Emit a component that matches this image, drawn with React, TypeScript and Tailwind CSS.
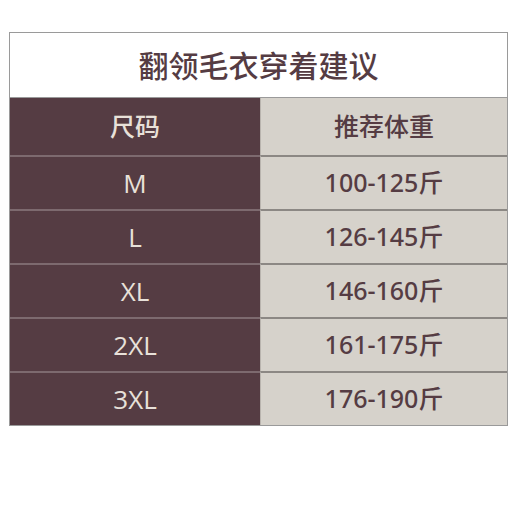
const rows = [
  { size: "M", weight: "100-125斤" },
  { size: "L", weight: "126-145斤" },
  { size: "XL", weight: "146-160斤" },
  { size: "2XL", weight: "161-175斤" },
  { size: "3XL", weight: "176-190斤" },
];

const font = { fontFamily: '"Open Sans", "Noto Sans CJK SC", sans-serif' };
const numFont = { fontFamily: '"Noto Sans", "Noto Sans CJK SC", sans-serif' };

export default function App() {
  return (
    <div className="h-[520px] w-[520px] bg-white pl-[9px] pt-[32px]" style={font}>
      <div className="w-[499px] border border-[#9a9a9a]">
        <div className="flex h-[64px] items-center justify-center bg-white text-[30px] font-medium text-[#553c43]">
          翻领毛衣穿着建议
        </div>
        <div className="grid grid-cols-[250px_1fr] border-t border-[#9a9a9a]">
          <div className="flex h-[57px] items-center justify-center bg-[#553c43] text-[25px] font-medium text-[#e8e1d9]">
            尺码
          </div>
          <div className="flex h-[57px] items-center justify-center border-l border-[#b9b4ae] bg-[#d6d2cb] text-[25px] font-medium text-[#553c43]">
            推荐体重
          </div>
          {rows.map((r) => (
            <div key={r.size} className="contents">
              <div className="flex h-[54px] items-center justify-center border-t-2 border-[#7d6a6f] bg-[#553c43] text-[26px] text-[#e8e1d9]">
                {r.size}
              </div>
              <div
                className="flex h-[54px] items-center justify-center border-t-2 border-l border-t-[#8c8884] border-l-[#b9b4ae] bg-[#d6d2cb] text-[25px] font-medium text-[#553c43]"
                style={numFont}
              >
                {r.weight}
              </div>
            </div>
          ))}
        </div>
      </div>
    </div>
  );
}
